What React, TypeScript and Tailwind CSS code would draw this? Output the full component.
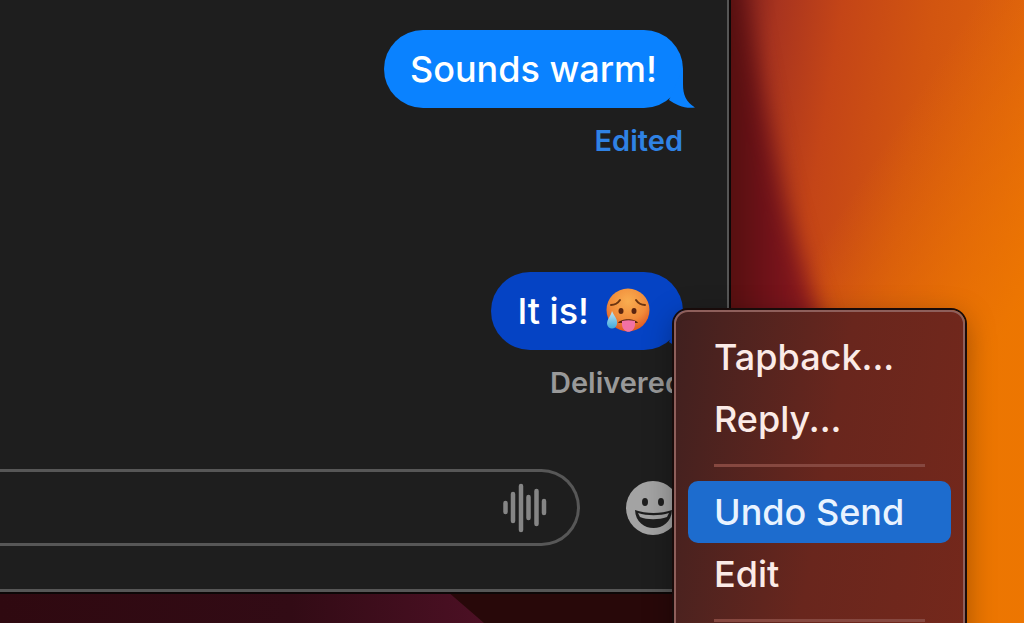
import { useState } from "react";

function Wallpaper() {
  return (
    <svg className="absolute inset-0 size-full" preserveAspectRatio="none" viewBox="0 0 1024 623" aria-hidden="true">
      <defs>
        <linearGradient id="orange" gradientUnits="userSpaceOnUse" x1="726" y1="90" x2="1040" y2="140">
          <stop offset="0" stopColor="#86241f" />
          <stop offset="0.12" stopColor="#a8341f" />
          <stop offset="0.32" stopColor="#c44517" />
          <stop offset="0.6" stopColor="#d25510" />
          <stop offset="1" stopColor="#e0640c" />
        </linearGradient>
        <linearGradient id="glow" gradientUnits="userSpaceOnUse" x1="880" y1="150" x2="1050" y2="260">
          <stop offset="0" stopColor="#ee7800" stopOpacity="0" />
          <stop offset="1" stopColor="#ee7800" stopOpacity="0.9" />
        </linearGradient>
        <linearGradient id="plum" x1="0" y1="0" x2="1" y2="0">
          <stop offset="0" stopColor="#2f0910" />
          <stop offset="0.6" stopColor="#320b15" />
          <stop offset="1" stopColor="#4c1024" />
        </linearGradient>
        <linearGradient id="crimson" gradientUnits="userSpaceOnUse" x1="728" y1="0" x2="815" y2="0">
          <stop offset="0" stopColor="#54100f" />
          <stop offset="0.4" stopColor="#6c1118" />
          <stop offset="1" stopColor="#8c191f" />
        </linearGradient>
        <filter id="soft" filterUnits="userSpaceOnUse" x="600" y="-100" width="424" height="860" colorInterpolationFilters="sRGB">
          <feGaussianBlur stdDeviation="11" />
        </filter>
      </defs>
      <rect width="1024" height="623" fill="url(#orange)" />
      <rect width="1024" height="623" fill="url(#glow)" />
      <path d="M660 -60 H738 C748 20 760 80 772 140 C784 200 797 250 818 310 L900 700 H660 Z" fill="url(#crimson)" filter="url(#soft)" />
      <rect y="585" width="700" height="38" fill="#280809" />
      <path d="M0 585 H440 L484 623 H0 Z" fill="url(#plum)" />
    </svg>
  );
}

function HotFace() {
  return (
    <svg className="size-[46px] shrink-0" viewBox="0 0 46 46" role="img" aria-label="hot face">
      <defs>
        <radialGradient id="face" cx="0.5" cy="0.3" r="0.72">
          <stop offset="0" stopColor="#f9ad50" />
          <stop offset="0.6" stopColor="#f08b3a" />
          <stop offset="1" stopColor="#dd5220" />
        </radialGradient>
        <linearGradient id="sweat" x1="0" y1="0" x2="0" y2="1">
          <stop offset="0" stopColor="#c5e6f2" />
          <stop offset="1" stopColor="#3fa9dc" />
        </linearGradient>
      </defs>
      <circle cx="23" cy="22" r="21.500" fill="url(#face)" />
      <path d="M6 17 C10 17 13 15 15 12 M31 12 C33 15 36 17 40 17" fill="none" stroke="#6b3410" strokeWidth="2" strokeLinecap="round" />
      <ellipse cx="16" cy="23" rx="2.500" ry="3" fill="#5a2510" />
      <ellipse cx="29" cy="23" rx="2.500" ry="3" fill="#5a2510" />
      <path d="M13 35 C16 30 30 30 33 35 Z" fill="#5a2310" />
      <path d="M17 33 C21 32 26 32 30 33 V37 C29 46 18 46 17 37 Z" fill="#f271a4" />
      <path d="M7 23 C9 28 13 31 12 36 C11 42 3 42 2 36 C2 31 6 28 7 23 Z" fill="url(#sweat)" />
    </svg>
  );
}

function Tail() {
  return (
    <svg className="absolute right-[-12px] bottom-0 h-[40px] w-[34px]" viewBox="0 0 34 40" aria-hidden="true">
      <path d="M22 0 V16 C22 27 25 34 34 39.500 C24 41 15 37 8 32 Z" fill="currentColor" />
    </svg>
  );
}

function Waveform() {
  return (
    <svg className="h-[50px] w-[44px]" viewBox="0 0 44 50" aria-hidden="true">
      <path d="M2.500 20V29M10 11V38M18 3V47M25.500 14V35M33.500 8V41M41 18V30" stroke="#858585" strokeWidth="4.500" strokeLinecap="round" />
    </svg>
  );
}

function Smiley() {
  return (
    <svg className="size-[54px]" viewBox="0 0 54 54" aria-hidden="true">
      <circle cx="27" cy="27" r="27" fill="#a3a3a3" />
      <ellipse cx="19" cy="21" rx="3" ry="4" fill="#1e1e1e" />
      <ellipse cx="35" cy="21" rx="3" ry="4" fill="#1e1e1e" />
      <path d="M9 29 C20 33 35 33 46 29 C45 53 10 53 9 29 Z" fill="#1e1e1e" />
      <path d="M12 32 C21 35 34 35 43 32 L41 36 C33 39 21 39 14 36 Z" fill="#a3a3a3" />
    </svg>
  );
}

const groups = [["Tapback...", "Reply..."], ["Undo Send", "Edit"]];

function ContextMenu() {
  const [active, setActive] = useState("Undo Send");
  return (
    <div
      className="absolute top-[38px] left-full z-10 -ml-[9px] w-[291px] rounded-[14px] border-2 border-[#8e5f5b] bg-linear-100 from-[#40201f] via-[#69261d] to-[#75281b] px-3 pt-[14px] pb-20 shadow-[0_0_0_2px_#180b0a,0_8px_30px_#00000059]"
      role="menu"
    >
      {groups.map((items) => (
        <div key={items[0]}>
          {items.map((label) => (
            <button
              key={label}
              role="menuitem"
              onMouseEnter={() => setActive(label)}
              className={`block h-[62px] w-full rounded-[10px] px-[26px] text-left text-[36px] leading-[62px] font-medium ${active === label ? "bg-[#1d6cce] text-[#e9f3ff]" : "text-[#fbebe7]"}`}
            >
              {label}
            </button>
          ))}
          <hr className="mx-[26px] my-[14px] border-t-3 border-[#864840]" />
        </div>
      ))}
    </div>
  );
}

export default function App() {
  return (
    <div className="relative flex h-screen flex-col overflow-hidden bg-[#280809] pr-[295px] pb-[31px] font-['Inter',sans-serif]">
      <Wallpaper />
      <main className="relative flex flex-1 flex-col border-r-2 border-b-3 border-[#565656] bg-[#1e1e1e] shadow-[0_0_0_2px_#0c0707]">
        <section className="flex flex-1 flex-col items-end pt-[30px] pr-11" aria-label="Messages">
          <div className="relative rounded-full bg-[#0a82ff] px-[26px] text-[36px] leading-[78px] font-medium text-white">
            Sounds warm!
            <span className="text-[#0a82ff]"><Tail /></span>
          </div>
          <button className="mt-3 text-[29px] leading-[42px] font-semibold text-[#2f82e4]">Edited</button>
          <div className="relative mt-[110px] flex flex-col items-end">
            <div className="relative flex items-center gap-4 rounded-full bg-[#0543c4] pr-8 pl-[26px] text-[36px] leading-[78px] font-medium text-white">
              <span>It is!</span>
              <HotFace />
              <span className="absolute inset-0 text-[#0543c4]"><Tail /></span>
            </div>
            <p className="mt-3 text-[29px] leading-[42px] font-semibold text-[#999999]">Delivered</p>
            <ContextMenu />
          </div>
        </section>
        <form className="flex items-center gap-[46px] pr-[47px] pb-[43px]">
          <div className="flex h-[77px] min-w-0 flex-1 items-center rounded-r-full border-3 border-l-0 border-[#575757] pr-[30px]">
            <input aria-label="Message" className="h-full min-w-0 flex-1 bg-transparent px-4 text-[36px] text-white outline-none" />
            <button type="button" aria-label="Record audio"><Waveform /></button>
          </div>
          <button type="button" aria-label="Emoji"><Smiley /></button>
        </form>
      </main>
    </div>
  );
}
